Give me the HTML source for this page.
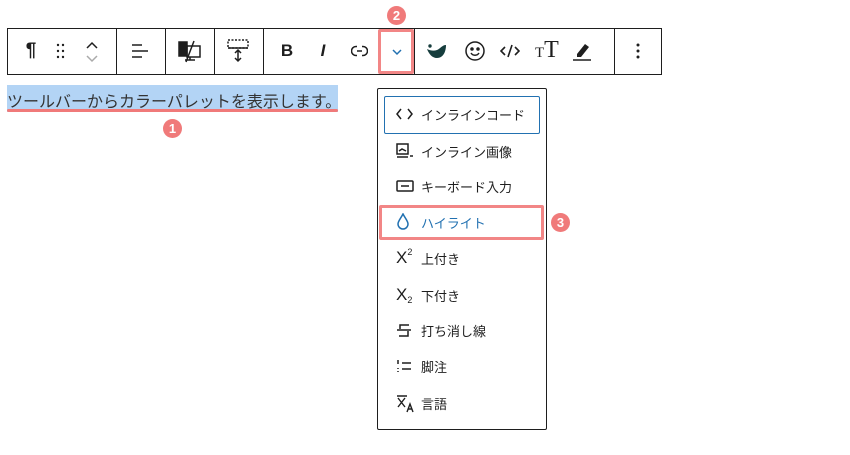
<!DOCTYPE html>
<html><head><meta charset="utf-8"><style>
*{margin:0;padding:0;box-sizing:border-box}
body{width:850px;height:455px;background:#fff;position:relative;overflow:hidden;font-family:"Liberation Sans","Noto Sans CJK JP",sans-serif;color:#1e1e1e}
.a{position:absolute}
.tb{left:7px;top:28px;width:655px;height:47px;border:1px solid #1e1e1e}
.sep{top:28px;width:1px;height:47px;background:#1e1e1e}
.ic{display:flex;align-items:center;justify-content:center}
.num{width:19px;height:19px;border-radius:50%;background:#f07a7a;color:#fff;font-weight:bold;font-size:13px;display:flex;align-items:center;justify-content:center}
.menu{left:377px;top:88px;width:170px;height:342px;border:1px solid #1e1e1e;border-radius:2px}
.it{position:absolute;left:396px;font-size:13px;display:flex;align-items:center;height:20px}
.it .g{width:22px;display:inline-flex;align-items:center;position:relative;height:20px}
.it span.t{margin-left:3px}
</style></head><body>
<div class="a tb"></div>
<div class="a sep" style="left:116px"></div>
<div class="a sep" style="left:165px"></div>
<div class="a sep" style="left:214px"></div>
<div class="a sep" style="left:263px"></div>
<div class="a sep" style="left:414px"></div>
<div class="a sep" style="left:614px"></div>
<div class="a" style="left:378px;top:29px;width:36px;height:45px;border:3px solid #f28686;border-radius:2px"></div>
<div class="a num" style="left:387px;top:6px">2</div>

<div class="a ic" style="left:22px;top:40px;width:18px;height:22px;font-size:19px;font-weight:bold">¶</div>
<svg class="a" style="left:55px;top:43px" width="12" height="16"><g fill="#1e1e1e"><circle cx="3" cy="2" r="1.2"/><circle cx="8" cy="2" r="1.2"/><circle cx="3" cy="8" r="1.2"/><circle cx="8" cy="8" r="1.2"/><circle cx="3" cy="14" r="1.2"/><circle cx="8" cy="14" r="1.2"/></g></svg>
<svg class="a" style="left:85px;top:40px" width="14" height="24" fill="none" stroke-width="1.5"><path d="M2 8l5-5 5 5" stroke="#1e1e1e"/><path d="M2 16l5 5 5-5" stroke="#aaa"/></svg>
<svg class="a" style="left:131px;top:42px" width="18" height="18" stroke="#1e1e1e" stroke-width="1.5"><path d="M1 3h10M1 9h16M1 15h10"/></svg>
<svg class="a" style="left:178px;top:40px" width="24" height="24" fill="none" stroke="#1e1e1e" stroke-width="1.5"><rect x="1" y="2" width="8" height="14" fill="#1e1e1e"/><rect x="9" y="6" width="13" height="11"/><path d="M7 20h10M12 17v3M16 1L8 22"/></svg>
<svg class="a" style="left:226px;top:38px" width="24" height="26" fill="none" stroke="#1e1e1e" stroke-width="1.5"><path d="M2 2h20v8H2z" stroke-dasharray="2 1.5"/><path d="M2 10h20M12 12v11M9 15l3-3 3 3M9 20l3 3 3-3"/></svg>
<div class="a ic" style="left:279px;top:40px;width:16px;height:22px;font-size:17px;font-weight:bold">B</div>
<div class="a ic" style="left:316px;top:40px;width:14px;height:22px;font-size:17px;font-style:italic;font-weight:bold">I</div>
<svg class="a" style="left:351px;top:45px" width="17" height="12" fill="none" stroke="#1e1e1e" stroke-width="1.5"><path d="M6 1.5H5a4.5 4.5 0 000 9h1M11 1.5h1a4.5 4.5 0 010 9h-1M6 6h5"/></svg>
<svg class="a" style="left:391px;top:48px" width="12" height="8" fill="none" stroke="#2271b1" stroke-width="1.5"><path d="M2 2l4 4 4-4"/></svg>
<svg class="a" style="left:426px;top:41px" width="22" height="20"><path d="M1 8c2 5 5 9 10 9 6 0 9-6 9-13-4 0-6 4-9 5-3 1-6 1-10-1z" fill="#163d3d"/><circle cx="4" cy="5" r="1.7" fill="#163d3d"/></svg>
<svg class="a" style="left:464px;top:40px" width="22" height="22" fill="none" stroke="#1e1e1e" stroke-width="1.5"><circle cx="11" cy="11" r="9"/><circle cx="8" cy="9" r="1" fill="#1e1e1e"/><circle cx="14" cy="9" r="1" fill="#1e1e1e"/><path d="M7 13c2 3 6 3 8 0"/></svg>
<svg class="a" style="left:500px;top:44px" width="20" height="14" fill="none" stroke="#1e1e1e" stroke-width="1.6"><path d="M5 3L1 7l4 4M15 3l4 4-4 4M12 1L8 13"/></svg>
<div class="a" style="left:535px;top:37px;font-family:'Liberation Serif',serif;font-size:24px"><span style="font-size:15px">T</span>T</div>
<svg class="a" style="left:571px;top:39px" width="22" height="24"><path d="M6 15L14 5l4 3-8 10H6z" fill="#1e1e1e"/><path d="M2 21h18" stroke="#1e1e1e" stroke-width="1.5"/></svg>
<svg class="a" style="left:635px;top:42px" width="6" height="18" fill="#1e1e1e"><circle cx="3" cy="3" r="1.5"/><circle cx="3" cy="9" r="1.5"/><circle cx="3" cy="15" r="1.5"/></svg>

<div class="a" style="left:7px;top:85px;width:331px;height:27px;background:#b3d4f5"></div>
<div class="a" style="left:7px;top:88px;font-size:16px;white-space:nowrap;color:#333">ツールバーからカラーパレットを表示します。</div>
<div class="a" style="left:7px;top:109px;width:331px;height:3px;background:#f07a7a;border-radius:2px"></div>
<div class="a num" style="left:163px;top:119px">1</div>

<div class="a menu"></div>
<div class="a" style="left:384px;top:96px;width:156px;height:38px;border:1.5px solid #2271b1;border-radius:2px"></div>
<div class="a" style="left:379px;top:205px;width:165px;height:35px;border:3px solid #f28686;border-radius:2px"></div>
<div class="a num" style="left:551px;top:213px">3</div>

<div class="it" style="top:104px"><span class="g"><svg width="18" height="14" fill="none" stroke="#1e1e1e" stroke-width="1.5"><path d="M5 2L1 7l4 5M12 2l4 5-4 5"/></svg></span><span class="t">インラインコード</span></div>
<div class="it" style="top:141px"><span class="g"><svg width="18" height="16" fill="none" stroke="#1e1e1e" stroke-width="1.5"><rect x="1" y="1" width="11" height="10"/><path d="M1 14h11M14 13h3M3 8l3-2 4 2"/></svg></span><span class="t">インライン画像</span></div>
<div class="it" style="top:176px"><span class="g"><svg width="18" height="14" fill="none" stroke="#1e1e1e" stroke-width="1.5"><rect x="1" y="2" width="16" height="10" rx="1"/><path d="M5 7h8"/></svg></span><span class="t">キーボード入力</span></div>
<div class="it" style="top:212px;color:#2271b1"><span class="g"><svg width="14" height="18" fill="none" stroke="#2271b1" stroke-width="1.5"><path d="M7 1C5 5 2 8 2 11a5 5 0 0010 0c0-3-3-6-5-10z"/></svg></span><span class="t">ハイライト</span></div>
<div class="it" style="top:248px"><span class="g"><span style="font-size:17px">X</span><span style="font-size:9px;position:relative;top:-6px">2</span></span><span class="t">上付き</span></div>
<div class="it" style="top:285px"><span class="g"><span style="font-size:17px">X</span><span style="font-size:9px;position:relative;top:5px">2</span></span><span class="t">下付き</span></div>
<div class="it" style="top:320px"><span class="g"><svg width="16" height="16" fill="none" stroke="#1e1e1e" stroke-width="1.5"><path d="M13 3H4v4M1 8h14M12 9v5H3"/></svg></span><span class="t">打ち消し線</span></div>
<div class="it" style="top:356px"><span class="g"><svg width="16" height="14" fill="none" stroke="#1e1e1e" stroke-width="1.5"><path d="M2 1v4M2 9v1M2 12v1M6 4h9M6 10h9"/></svg></span><span class="t">脚注</span></div>
<div class="it" style="top:393px"><span class="g"><svg width="20" height="20" fill="none" stroke="#1e1e1e" stroke-width="1.4"><path d="M1 3h10M2 5l7 9M9 5l-7 9M11 19l3-8 3 8M12 16h4"/></svg></span><span class="t">言語</span></div>
</body></html>
